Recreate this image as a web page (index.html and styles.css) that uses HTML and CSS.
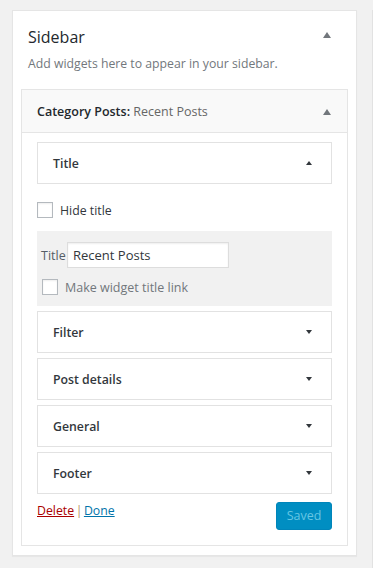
FILE: index.html
```html
<!DOCTYPE html>
<html>
<head>
<meta charset="utf-8">
<link rel="stylesheet" href="styles.css">
</head>
<body>
<div class="page">
  <div class="cols">
    <div class="sidebar-card">
      <div class="sidebar-head">
        <h2 class="sidebar-name">Sidebar</h2>
        <span class="arrow-up big head-arrow"></span>
      </div>
      <p class="sidebar-desc">Add widgets here to appear in your sidebar.</p>
      <div class="widget">
        <div class="widget-top">
          <span class="widget-title"><strong>Category Posts:</strong> <span class="in-title">Recent Posts</span></span>
          <span class="arrow-up big"></span>
        </div>
        <div class="widget-inside">
          <div class="section-head"><span>Title</span><span class="arrow-up small"></span></div>
          <label class="check-row hide-row"><span class="checkbox"></span><span>Hide title</span></label>
          <div class="grey-box">
            <div class="field-row"><span class="field-label">Title</span><span class="text-input">Recent Posts</span></div>
            <label class="check-row link-row"><span class="checkbox"></span><span>Make widget title link</span></label>
          </div>
          <div class="section-head"><span>Filter</span><span class="arrow-down small"></span></div>
          <div class="section-head"><span>Post details</span><span class="arrow-down small"></span></div>
          <div class="section-head"><span>General</span><span class="arrow-down small"></span></div>
          <div class="section-head"><span>Footer</span><span class="arrow-down small"></span></div>
          <div class="widget-actions">
            <div class="links"><a class="delete" href="#">Delete</a><span class="sep">|</span><a class="done" href="#">Done</a></div>
            <span class="btn-saved">Saved</span>
          </div>
        </div>
      </div>
    </div>
    <div class="side-peek"></div>
  </div>
  <div class="next-card"></div>
</div>
</body>
</html>
```
FILE: styles.css
```css
* { box-sizing: border-box; }
html, body { margin: 0; padding: 0; }
body {
  background: #f1f1f1;
  font-family: "Open Sans", "Noto Sans", sans-serif;
  color: #444;
  font-size: 12.5px;
  width: 373px;
  height: 568px;
  overflow: hidden;
}
.page {
  width: 373px;
  height: 568px;
  overflow: hidden;
  padding: 10px 0 0 12px;
}
.cols { display: flex; align-items: flex-start; }
.sidebar-card {
  width: 345px;
  flex: none;
  background: #fff;
  border: 1px solid #e5e5e5;
  box-shadow: 0 1px 1px rgba(0,0,0,.04);
  padding-bottom: 9px;
}
.side-peek {
  margin-left: 15px;
  width: 1px;
  height: 560px;
  flex: none;
  background: #e2e2e2;
}
.next-card {
  margin-top: 10px;
  width: 345px;
  height: 2px;
  background: #fff;
  border-top: 1px solid #e2e2e2;
}
.sidebar-head {
  display: flex;
  align-items: flex-start;
  justify-content: space-between;
  padding: 14px 25px 0 15px;
}
.sidebar-name {
  margin: 0;
  font-size: 16px;
  font-weight: 400;
  color: #23282d;
  line-height: 24px;
}
.head-arrow { margin-top: 7px; }
.sidebar-desc {
  margin: 6px 0 16px 0;
  padding: 0 15px;
  color: #72777c;
  font-size: 12.25px;
  line-height: 18px;
}
.arrow-up, .arrow-down { display: block; width: 0; height: 0; flex: none; }
.arrow-up.big {
  border-left: 4.5px solid transparent;
  border-right: 4.5px solid transparent;
  border-bottom: 6px solid #72777c;
}
.arrow-up.small {
  border-left: 3.5px solid transparent;
  border-right: 3.5px solid transparent;
  border-bottom: 4px solid #32373c;
}
.arrow-down.small {
  border-left: 3.5px solid transparent;
  border-right: 3.5px solid transparent;
  border-top: 4px solid #32373c;
}
.widget {
  margin: 0 8px;
  border: 1px solid #e5e5e5;
  background: #fff;
}
.widget-top {
  height: 43px;
  background: #f9f9f9;
  border-bottom: 1px solid #e5e5e5;
  display: flex;
  align-items: center;
  justify-content: space-between;
  padding: 1px 16px 0 15px;
}
.widget-title { font-size: 12.5px; color: #23282d; }
.widget-title strong { font-weight: 600; }
.in-title { color: #666; font-weight: 400; }
.widget-inside {
  display: flex;
  flex-direction: column;
  padding: 9px 15px 15px 15px;
}
.section-head {
  height: 42px;
  border: 1px solid #e2e2e2;
  display: flex;
  align-items: center;
  justify-content: space-between;
  padding: 0 19px 0 15px;
  font-size: 12.3px;
  font-weight: 600;
  color: #32373c;
  margin-bottom: 5px;
  flex: none;
}
.check-row {
  display: flex;
  align-items: center;
  font-size: 12.3px;
  height: 16px;
  flex: none;
}
.checkbox {
  width: 16px;
  height: 16px;
  flex: none;
  border: 1px solid #b4b9be;
  background: #fff;
  box-shadow: inset 0 1px 2px rgba(0,0,0,.07);
}
.hide-row { margin-top: 13px; color: #32373c; gap: 7px; }
.grey-box {
  margin-top: 13px;
  background: #f1f1f1;
  padding: 11px 4px 11px 4px;
  margin-bottom: 5px;
  flex: none;
}
.field-row { display: flex; align-items: center; }
.field-label { color: #555d66; font-size: 12.5px; width: 26px; }
.text-input {
  display: block;
  width: 162px;
  height: 26px;
  background: #fff;
  border: 1px solid #ddd;
  box-shadow: inset 0 1px 2px rgba(0,0,0,.07);
  padding: 0 5px;
  line-height: 24px;
  font-size: 13px;
  color: #32373c;
}
.link-row { margin-top: 11px; margin-left: 1px; gap: 7px; color: #72777c; font-size: 12.5px; }
.widget-actions {
  display: flex;
  justify-content: space-between;
  align-items: flex-start;
}
.links { font-size: 12.3px; line-height: 20px; padding-top: 2px; }
.delete { color: #a00; }
.done { color: #0073aa; }
.sep { color: #b8965e; margin: 0 1.5px; }
.btn-saved {
  display: block;
  width: 56px;
  height: 28px;
  margin-top: 3px;
  background: #008ec2;
  border: 1px solid #0085ba;
  border-radius: 3px;
  color: #66c6e4;
  font-size: 12.5px;
  line-height: 26px;
  text-align: center;
}
```
